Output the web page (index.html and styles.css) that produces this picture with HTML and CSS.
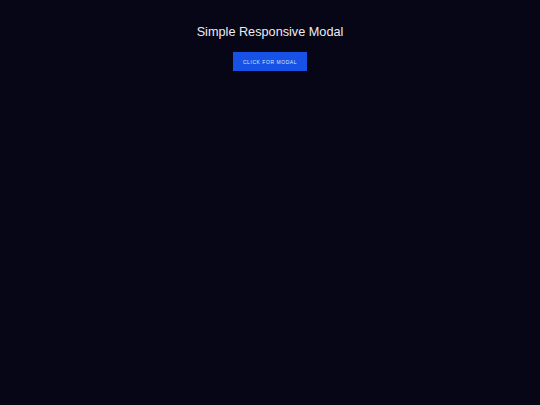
FILE: index.html
```html
<!DOCTYPE html>
<html>
<head>
<meta charset="utf-8">
<link rel="stylesheet" href="styles.css">
</head>
<body>
<main class="page">
  <h1 class="title">Simple Responsive Modal</h1>
  <button class="open-btn">Click for modal</button>
</main>
</body>
</html>
```
FILE: styles.css
```css
html, body {
  margin: 0;
  padding: 0;
  height: 100%;
  background: #070617;
}
.page {
  display: flex;
  flex-direction: column;
  align-items: center;
  padding-top: 24px;
  font-family: "Liberation Sans", Arial, sans-serif;
}
.title {
  margin: 0;
  font-size: 12.7px;
  font-weight: normal;
  color: #ececf2;
  line-height: 16px;
}
.open-btn {
  margin-top: 12px;
  width: 74px;
  height: 19px;
  border: none;
  background: #1751e6;
  color: #dfe6ff;
  font-family: "Liberation Sans", Arial, sans-serif;
  font-size: 5px;
  letter-spacing: 0.55px;
  text-transform: uppercase;
  padding: 0;
}
```
